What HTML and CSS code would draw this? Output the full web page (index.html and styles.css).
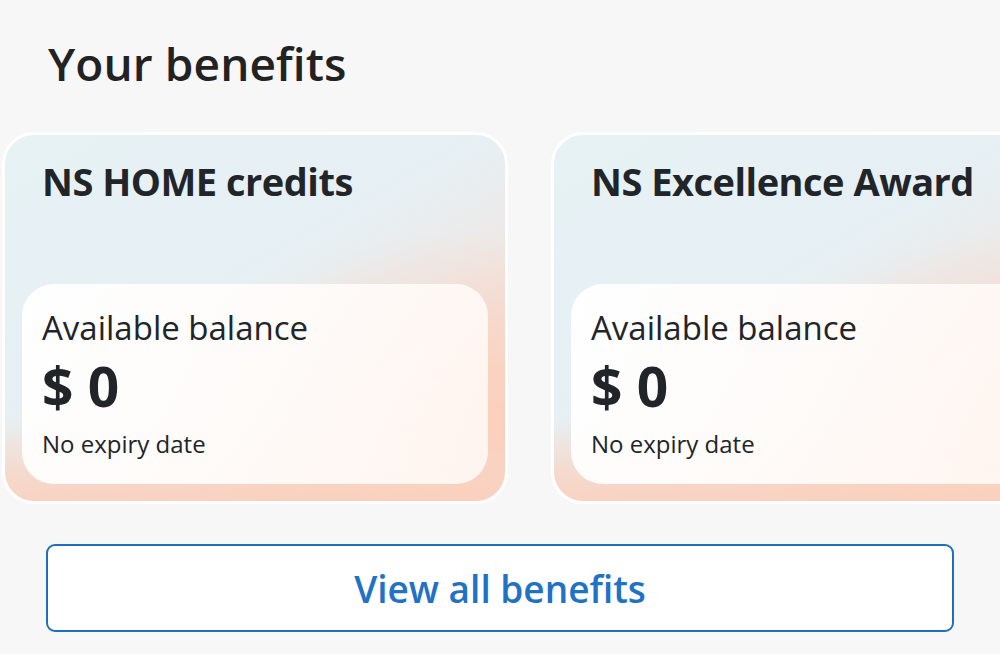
FILE: index.html
```html
<!DOCTYPE html>
<html lang="en">
<head>
<meta charset="utf-8">
<title>Your benefits</title>
<link rel="stylesheet" href="styles.css">
</head>
<body>
<main class="page">
  <h1 class="heading">Your benefits</h1>
  <div class="carousel">
    <section class="card">
      <h2 class="card-title">NS HOME credits</h2>
      <div class="balance">
        <div class="balance-label">Available balance</div>
        <div class="balance-amount">$ 0</div>
        <div class="balance-expiry">No expiry date</div>
      </div>
    </section>
    <section class="card">
      <h2 class="card-title">NS Excellence Award</h2>
      <div class="balance">
        <div class="balance-label">Available balance</div>
        <div class="balance-amount">$ 0</div>
        <div class="balance-expiry">No expiry date</div>
      </div>
    </section>
  </div>
  <div class="actions">
    <button class="view-all" type="button">View all benefits</button>
  </div>
</main>
</body>
</html>
```

FILE: styles.css
```css
* { box-sizing: border-box; }
html, body {
  margin: 0;
  padding: 0;
  background: #f7f7f7;
  overflow: hidden;
}
body {
  font-family: "Open Sans", "Noto Sans", sans-serif;
  color: #22262a;
  width: 1000px;
  height: 654px;
}
.page {
  display: flex;
  flex-direction: column;
}
.heading {
  margin: 0;
  padding: 32px 0 0 48px;
  font-size: 46px;
  font-weight: 600;
  line-height: 62px;
  letter-spacing: 0.1px;
  color: #222;
}
.carousel {
  display: flex;
  gap: 43px;
  padding: 38px 0 0 2px;
  overflow: hidden;
}
.card {
  flex: 0 0 506px;
  height: 372px;
  border: 3px solid #ffffff;
  border-radius: 32px;
  background:
    linear-gradient(180deg, rgba(250, 210, 192, 0) 78%, rgba(248, 212, 196, 0.75) 92%, rgba(250, 208, 190, 0.9) 100%),
    radial-gradient(ellipse 65% 60% at 100% 85%, rgba(251, 206, 186, 0.95), rgba(251, 206, 186, 0) 100%),
    linear-gradient(150deg, #e7f2f5 0%, #e6f0f4 42%, #ede9e7 60%, #f7dbcd 80%, #fbd2c1 100%);
  padding: 21px 17px 17px 17px;
  display: flex;
  flex-direction: column;
  justify-content: space-between;
}
.card-title {
  margin: 0;
  padding-left: 20px;
  font-size: 38px;
  font-weight: 700;
  line-height: 50px;
  letter-spacing: -0.5px;
  color: #212529;
}
.balance {
  height: 200px;
  border-radius: 32px;
  background: linear-gradient(110deg, rgba(255,255,255,0.97) 0%, rgba(255,252,250,0.95) 50%, rgba(255,247,243,0.93) 100%);
  padding: 22px 20px 0 20px;
}
.balance-label {
  font-size: 33px;
  line-height: 44px;
  font-weight: 400;
  color: #212529;
}
.balance-amount {
  font-size: 55px;
  font-weight: 700;
  line-height: 64px;
  margin-top: 4px;
  color: #212529;
}
.balance-expiry {
  font-size: 24px;
  line-height: 32px;
  margin-top: 10px;
  color: #212529;
}
.actions {
  padding: 40px 46px 0 46px;
}
.view-all {
  width: 100%;
  height: 88px;
  border: 2px solid #1f6fc0;
  border-radius: 9px;
  background: #ffffff;
  color: #1f72c4;
  font-family: "Open Sans", "Noto Sans", sans-serif;
  font-size: 37px;
  font-weight: 600;
  cursor: pointer;
}
```
